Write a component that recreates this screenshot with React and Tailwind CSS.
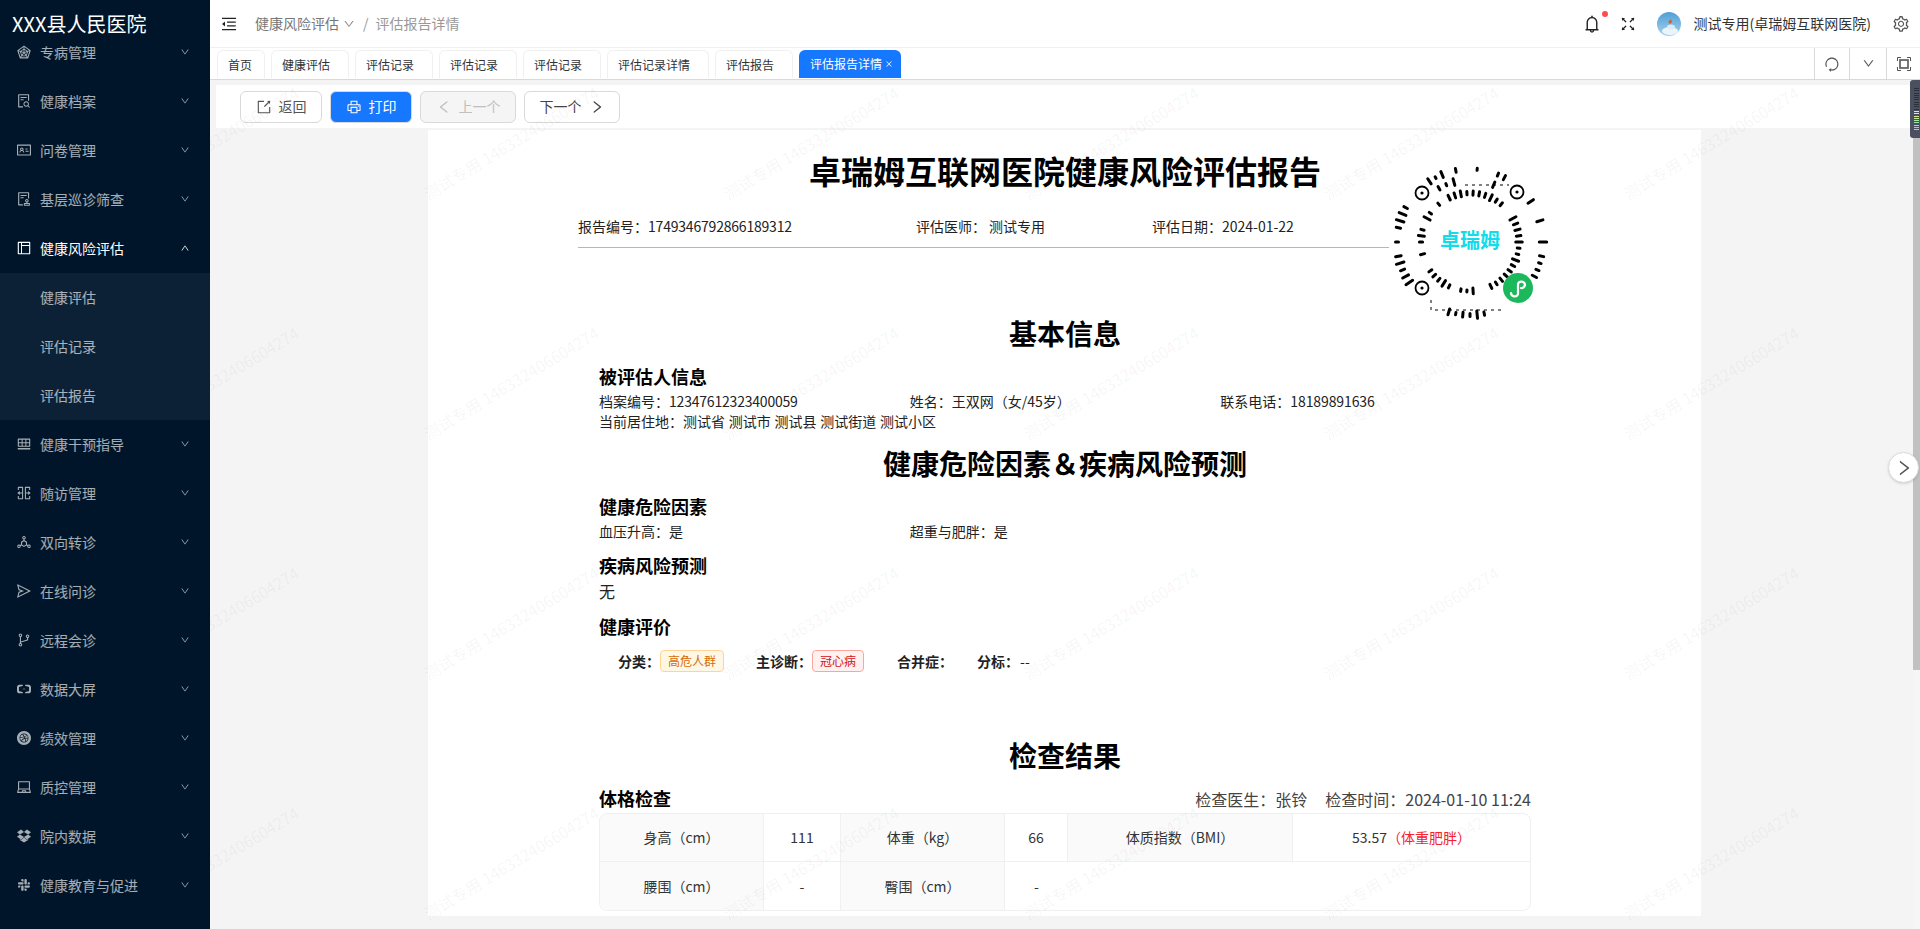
import React from 'react';
import {
  AiOutlineRadarChart, AiOutlineFileSearch, AiOutlineIdcard, AiOutlineAudit, AiOutlineLayout,
  AiOutlineInsertRowBelow, AiOutlineSplitCells, AiOutlineDeploymentUnit, AiOutlineSend, AiOutlineBranches,
  AiOutlineAliyun, AiFillDribbbleCircle, AiOutlineLaptop, AiOutlineDropbox, AiOutlineSlack,
  AiOutlineDown, AiOutlineUp, AiOutlineMenuFold, AiOutlineBell, AiOutlineFullscreen, AiOutlineSetting,
  AiOutlineReload, AiOutlineExport, AiOutlinePrinter, AiOutlineLeft, AiOutlineRight, AiOutlineClose,
} from 'react-icons/ai';

const menuTop = [
  { label: '专病管理', Icon: AiOutlineRadarChart },
  { label: '健康档案', Icon: AiOutlineFileSearch },
  { label: '问卷管理', Icon: AiOutlineIdcard },
  { label: '基层巡诊筛查', Icon: AiOutlineAudit },
];
const subMenu = ['健康评估', '评估记录', '评估报告'];
const menuBottom = [
  { label: '健康干预指导', Icon: AiOutlineInsertRowBelow },
  { label: '随访管理', Icon: AiOutlineSplitCells },
  { label: '双向转诊', Icon: AiOutlineDeploymentUnit },
  { label: '在线问诊', Icon: AiOutlineSend },
  { label: '远程会诊', Icon: AiOutlineBranches },
  { label: '数据大屏', Icon: AiOutlineAliyun },
  { label: '绩效管理', Icon: AiFillDribbbleCircle },
  { label: '质控管理', Icon: AiOutlineLaptop },
  { label: '院内数据', Icon: AiOutlineDropbox },
  { label: '健康教育与促进', Icon: AiOutlineSlack },
];
const tabs = ['首页', '健康评估', '评估记录', '评估记录', '评估记录', '评估记录详情', '评估报告'];

function MenuItem({ label, Icon }) {
  return (
    <div className="h-[49px] flex items-center pl-[16px] pr-[20px] text-[14px] text-white/65">
      <Icon className="w-[16px] h-[16px] mr-[8px] shrink-0" />
      <span className="flex-1">{label}</span>
      <AiOutlineDown className="w-[10px] h-[10px]" />
    </div>
  );
}

function Sidebar() {
  return (
    <aside className="w-[210px] shrink-0 bg-[#001529] relative z-20 overflow-hidden">
      {/* 标题压在被滚动的菜单上面 */}
      <div className="h-[27.5px] pl-[12px] text-[20px] leading-[47px] text-white whitespace-nowrap">XXX县人民医院</div>
      {menuTop.map((m) => <MenuItem key={m.label} {...m} />)}
      <div className="h-[49px] flex items-center pl-[16px] pr-[20px] text-[14px] text-white">
        <AiOutlineLayout className="w-[16px] h-[16px] mr-[8px]" />
        <span className="flex-1">健康风险评估</span>
        <AiOutlineUp className="w-[10px] h-[10px]" />
      </div>
      <div className="bg-[#0c2135]">
        {subMenu.map((s) => (
          <div key={s} className="h-[49px] flex items-center pl-[40px] text-[14px] text-white/65">{s}</div>
        ))}
      </div>
      {menuBottom.map((m) => <MenuItem key={m.label} {...m} />)}
    </aside>
  );
}

function Avatar() {
  return (
    <svg width="24" height="24" viewBox="0 0 24 24" className="rounded-full">
      <defs>
        <linearGradient id="sky" x1="0" y1="0" x2="0" y2="1">
          <stop offset="0" stopColor="#4f9fd6" />
          <stop offset="1" stopColor="#a9d2ec" />
        </linearGradient>
      </defs>
      <rect width="24" height="24" fill="url(#sky)" />
      <ellipse cx="13" cy="19" rx="8" ry="4" fill="#eaf4fa" />
      <ellipse cx="14" cy="15" rx="4" ry="2.5" fill="#dcecf6" />
      <path d="M11 10l3-3 1 3-2 2z" fill="#c4683a" />
    </svg>
  );
}

function Header() {
  return (
    <header className="h-[48px] shrink-0 bg-white border-b border-[#f0f0f0] flex items-center pl-[10px] pr-[10px] text-[14px]">
      <AiOutlineMenuFold className="w-[18px] h-[18px] text-[#222]" />
      <span className="ml-[17px] text-[#777]">健康风险评估</span>
      <AiOutlineDown className="w-[12px] h-[12px] ml-[4px] text-[#888]" />
      <span className="ml-[8px] text-[#999]">/</span>
      <span className="ml-[7px] text-[#999]">评估报告详情</span>
      <div className="flex-1" />
      <div className="relative">
        <AiOutlineBell className="w-[20px] h-[20px] text-[#222] block" />
        <span className="absolute -right-[6px] -top-[3px] w-[6px] h-[6px] rounded-full bg-[#ff4d4f]" />
      </div>
      <AiOutlineFullscreen className="w-[18px] h-[18px] ml-[17px] text-[#222]" />
      <div className="ml-[20px]"><Avatar /></div>
      <span className="ml-[13px] text-[#333] whitespace-nowrap">测试专用(卓瑞姆互联网医院)</span>
      <AiOutlineSetting className="w-[18px] h-[18px] ml-[21px] text-[#555]" />
    </header>
  );
}

function ScreenIcon() {
  return (
    <svg width="14" height="14" viewBox="0 0 14 14" fill="none" stroke="currentColor">
      <path d="M0.5 4V0.5H4M10 0.5H13.5V4M13.5 10V13.5H10M4 13.5H0.5V10" />
      <rect x="3" y="3" width="8" height="8" strokeWidth="1.6" />
    </svg>
  );
}

function TabBar() {
  return (
    <div className="h-[32px] shrink-0 bg-white border-b border-[#d9d9d9] flex pl-[7px] text-[12px] text-[#333]">
      <div className="flex gap-[6px] pt-[2px] flex-1">
        {tabs.map((t, i) => (
          <div
            key={i}
            className={`h-[28px] flex items-center border border-b-0 border-[#f0f0f0] rounded-t-[6px] ${i === 0 ? 'pl-[10px] pr-[12px]' : 'pl-[10px] pr-[18px]'}`}
          >
            {t}
          </div>
        ))}
        <div className="h-[28px] flex items-center pl-[11px] pr-[8px] rounded-t-[6px] bg-[#1677ff] text-white">
          评估报告详情
          <AiOutlineClose className="w-[8px] h-[8px] ml-[3px]" />
        </div>
      </div>
      <div className="w-[35px] flex items-center justify-center border-l border-[#d9d9d9] text-[#555]">
        <AiOutlineReload className="w-[16px] h-[16px] rotate-[135deg]" />
      </div>
      <div className="w-[37px] flex items-center justify-center border-l border-[#d9d9d9] text-[#555]">
        <AiOutlineDown className="w-[13px] h-[13px]" />
      </div>
      <div className="w-[34px] flex items-center justify-center border-l border-[#d9d9d9] text-[#555]">
        <ScreenIcon />
      </div>
    </div>
  );
}

function Toolbar() {
  const btn = 'h-[32px] flex items-center justify-center rounded-[6px] border border-[#d9d9d9] text-[14px]';
  return (
    <div className="mt-[5px] h-[43px] bg-white flex items-center gap-[8px] pl-[24px]">
      <button className={`${btn} w-[82px] text-[#555] gap-[7px]`}>
        <AiOutlineExport className="w-[16px] h-[16px]" />返回
      </button>
      <button className={`${btn} w-[82px] gap-[7px] bg-[#1677ff] border-[#1677ff] text-white`}>
        <AiOutlinePrinter className="w-[16px] h-[16px]" />打印
      </button>
      <button className={`${btn} w-[96px] gap-[7px] bg-[#f5f5f5] text-[#bfbfbf]`}>
        <AiOutlineLeft className="w-[16px] h-[16px]" />上一个
      </button>
      <button className={`${btn} w-[96px] gap-[7px] text-[#444]`}>
        下一个<AiOutlineRight className="w-[16px] h-[16px]" />
      </button>
    </div>
  );
}

// 小程序码：按固定种子生成径向短线
function qrTicks() {
  const out = [];
  const cx = 81;
  const cy = 84;
  const avoid = [[33, 35], [128, 34], [33, 130], [129, 130]];
  const rings = [
    { r: 73, n: 64, min: 2, max: 8, cut: 0.3, skip: (a) => (a > 55 && a < 78) || (a > 112 && a < 125) },
    { r: 62, n: 48, min: 2, max: 8, cut: 0.4, skip: (a) => !(a > 125 && a < 150) && !(a > 205 && a < 295) },
    { r: 49, n: 50, min: 2, max: 7, cut: 0.25, skip: () => false },
  ];
  rings.forEach((ring, k) => {
    for (let i = 0; i < ring.n; i++) {
      const a = (i * 360) / ring.n;
      if (ring.skip(a)) continue;
      const h = Math.abs(Math.sin((i + 1) * 12.9898 + k * 78.233) * 43758.5453) % 1;
      if (h < ring.cut) continue;
      const len = ring.min + ((h - ring.cut) / (1 - ring.cut)) * (ring.max - ring.min);
      const rad = (a * Math.PI) / 180;
      const x = cx + ring.r * Math.cos(rad);
      const y = cy + ring.r * Math.sin(rad);
      if (avoid.some(([ax, ay]) => Math.hypot(ax - x, ay - y) < 13)) continue;
      out.push({
        x1: x - (Math.cos(rad) * len) / 2,
        y1: y - (Math.sin(rad) * len) / 2,
        x2: x + (Math.cos(rad) * len) / 2,
        y2: y + (Math.sin(rad) * len) / 2,
      });
    }
  });
  return out;
}

function MiniCode() {
  const ticks = qrTicks();
  return (
    <svg width="162" height="162" viewBox="0 0 162 162" className="absolute left-[961px] top-[28px]">
      <rect width="162" height="162" fill="#fff" />
      <g stroke="#000" strokeWidth="3" strokeLinecap="round">
        {ticks.map((t, i) => <line key={i} {...t} />)}
      </g>
      {[[33, 35], [128, 34], [33, 130]].map(([x, y]) => (
        <g key={x + '-' + y}>
          <circle cx={x} cy={y} r="6.5" fill="none" stroke="#000" strokeWidth="1.8" />
          <circle cx={x} cy={y} r="1.6" fill="#000" />
        </g>
      ))}
      <g fill="none" stroke="#000" strokeWidth="1" strokeDasharray="3 4">
        <path d="M42 142 V152 H115" />
        <path d="M76 27 H120" />
      </g>
      <text x="81" y="90" textAnchor="middle" fontSize="20" fontWeight="700" fill="#14dbe9">卓瑞姆</text>
      <circle cx="129" cy="130" r="15" fill="#1cb95c" />
      <path
        d="M122 135 a3.6 3.6 0 0 0 7 1 v-10 a3.6 3.6 0 0 1 7 1 a3.6 3.6 0 0 1 -4 3"
        fill="none"
        stroke="#fff"
        strokeWidth="2.2"
        strokeLinecap="round"
      />
    </svg>
  );
}

const h2 = 'h-[40px] leading-[38px] text-[28px] font-bold text-black text-center';
const h3 = 'h-[26px] leading-[24px] text-[18px] font-bold text-black';
const row = 'h-[21px] leading-[21px] text-[14px] mt-[1px]';
const labelCell = 'bg-[#fafafa] flex items-center justify-center border-r border-[#f0f0f0]';
const valueCell = 'flex items-center justify-center border-r border-[#f0f0f0]';

function Report() {
  return (
    <main className="relative ml-[212px] mt-[2px] w-[1273px] h-[786px] bg-white pl-[171px] pr-[170px] text-[#222] overflow-hidden">
      <MiniCode />
      <h1 className="mt-[19px] h-[44px] leading-[42px] text-[32px] font-bold text-black text-center whitespace-nowrap">
        卓瑞姆互联网医院健康风险评估报告
      </h1>
      <div className="-ml-[21px] w-[969px] mt-[23px] h-[32px] border-b border-[#b0b8c4] flex text-[14px] leading-[21px]">
        <div className="w-[338px]">报告编号：<span className="tracking-[-0.2px]">1749346792866189312</span></div>
        <div className="w-[236px]">评估医师：<span className="ml-[3px]">测试专用</span></div>
        <div>评估日期：2024-01-22</div>
      </div>

      <h2 className={`mt-[66px] ${h2}`}>基本信息</h2>
      <h3 className={`mt-[10px] ${h3}`}>被评估人信息</h3>
      <div className={`${row} grid grid-cols-3`}>
        <div>档案编号：<span className="tracking-[-0.2px]">12347612323400059</span></div>
        <div>姓名：王双网（女/45岁）</div>
        <div>联系电话：<span className="tracking-[-0.1px]">18189891636</span></div>
      </div>
      <div className="h-[21px] leading-[19px] text-[14px] [word-spacing:0.6px]">当前居住地：测试省 测试市 测试县 测试街道 测试小区</div>

      <h2 className={`mt-[11px] ${h2}`}>健康危险因素＆疾病风险预测</h2>
      <h3 className={`mt-[10px] ${h3}`}>健康危险因素</h3>
      <div className={`${row} grid grid-cols-3`}>
        <div>血压升高：是</div>
        <div>超重与肥胖：是</div>
      </div>
      <h3 className={`mt-[11px] ${h3}`}>疾病风险预测</h3>
      <div className="mt-[1px] h-[24px] leading-[22px] text-[16px]">无</div>
      <h3 className={`mt-[10px] ${h3}`}>健康评价</h3>
      <div className="mt-[10px] h-[22px] pl-[19px] flex items-center text-[14px]">
        <span className="font-bold">分类：</span>
        <span className="h-[22px] leading-[20px] px-[7px] text-[12px] rounded-[4px] border border-[#ffd591] bg-[#fff7e6] text-[#d46b08]">高危人群</span>
        <span className="ml-[32px] font-bold">主诊断：</span>
        <span className="h-[22px] leading-[20px] px-[7px] text-[12px] rounded-[4px] border border-[#ffa39e] bg-[#fff1f0] text-[#cf1322]">冠心病</span>
        <span className="ml-[33px] w-[80px] font-bold">合并症：</span>
        <span className="w-[43px] font-bold">分标：</span>
        <span>--</span>
      </div>

      <h2 className={`mt-[64px] ${h2}`}>检查结果</h2>
      <div className="mt-[10px] h-[26px] flex items-center justify-between">
        <h3 className={h3}>体格检查</h3>
        <div className="text-[16px] text-[#444]">
          检查医生：张铃<span className="ml-[18px]">检查时间：2024-01-10 11:24</span>
        </div>
      </div>
      <div className="mt-[1px] h-[98px] border border-[#f0f0f0] rounded-[8px] overflow-hidden text-[14px] text-[#333] grid grid-cols-[164px_77px_164px_63px_225px_1fr] grid-rows-[48px_1fr]">
        <div className={`${labelCell} border-b`}>身高（cm）</div>
        <div className={`${valueCell} border-b`}>111</div>
        <div className={`${labelCell} border-b`}>体重（kg）</div>
        <div className={`${valueCell} border-b`}>66</div>
        <div className={`${labelCell} border-b`}>体质指数（BMI）</div>
        <div className="flex items-center justify-center border-b border-[#f0f0f0]">
          53.57<span className="text-[#f5222d]">（体重肥胖）</span>
        </div>
        <div className={labelCell}>腰围（cm）</div>
        <div className={valueCell}>-</div>
        <div className={labelCell}>臀围（cm）</div>
        <div className="flex items-center justify-center">-</div>
      </div>
    </main>
  );
}

function Watermark() {
  const cells = Array.from({ length: 24 });
  return (
    <div className="absolute left-0 right-0 top-[80px] bottom-0 overflow-hidden pointer-events-none z-10">
      <div className="-ml-[80px] -mt-[117px] w-[1800px] grid grid-cols-[repeat(6,300px)] auto-rows-[240px]">
        {cells.map((_, i) => (
          <div key={i} className="flex items-end">
            <span className="whitespace-nowrap leading-[20px] text-[16px] text-black/[0.05] origin-bottom-left -rotate-[31deg]">
              测试专用 146332406604274
            </span>
          </div>
        ))}
      </div>
    </div>
  );
}

// 右上角贴边的小部件，绿色黄色是它的指示条
const meter = [
  '#2b2f3a', '#2b2f3a', '#2b2f3a', '#2b2f3a', '#2b2f3a', '#2b2f3a', '#2b2f3a', '#2b2f3a', '#2b2f3a', '#2b2f3a',
  '#e6e98c', '#e6e98c', '#dbe88f', '#c4e79a', '#a8e6ab', '#8fe5ba', '#7ce3c6', '#6fe2d0', '#6fe2d0',
];

function SideWidget() {
  return (
    <div className="absolute right-0 top-[80px] w-[10px] h-[58px] bg-[#4a5060] rounded-l-[3px] z-30 flex flex-col items-end pr-[1px] pt-[8px] gap-[1.3px]">
      {meter.map((c, i) => (
        <span key={i} className="block w-[5px] h-[1px]" style={{ backgroundColor: c }} />
      ))}
    </div>
  );
}

export default function App() {
  return (
    <div className="h-[929px] flex overflow-hidden font-['Noto_Sans_CJK_SC','Liberation_Sans',sans-serif]">
      <Sidebar />
      <div className="flex-1 min-w-0 relative flex flex-col bg-[#f4f4f4]">
        <Header />
        <TabBar />
        <div className="flex-1 flex min-h-0">
          <div className="flex-1 min-w-0 ml-[6px]">
            <Toolbar />
            <Report />
          </div>
          <div className="w-[7px] shrink-0 bg-[#f6f6f6]">
            <div className="h-[590px] bg-[#c1c1c1]" />
          </div>
        </div>
        <Watermark />
        <SideWidget />
        <div className="absolute right-[1px] top-[452px] w-[31px] h-[31px] rounded-full bg-white border border-[#dcdcdc] shadow-sm flex items-center justify-center z-30">
          <AiOutlineRight className="w-[20px] h-[20px] text-[#555]" />
        </div>
      </div>
    </div>
  );
}
